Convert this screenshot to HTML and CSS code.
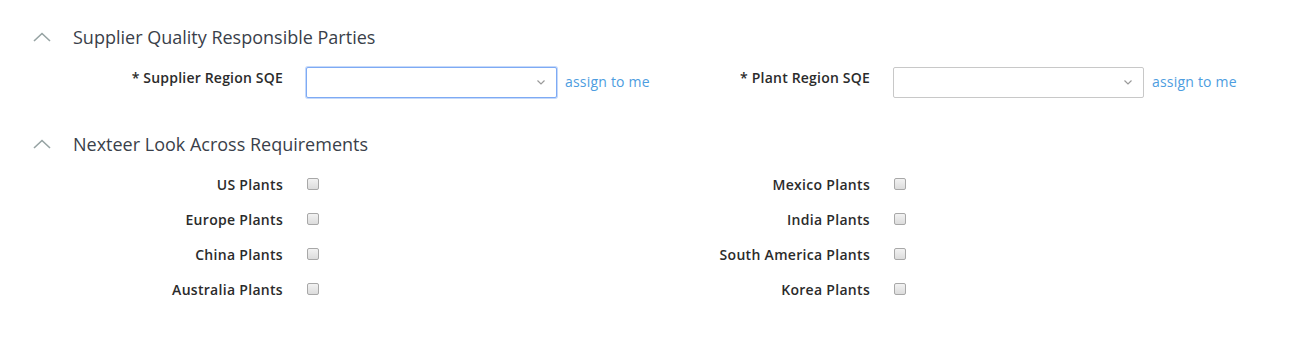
FILE: index.html
```html
<!DOCTYPE html>
<html lang="en">
<head>
  <meta charset="UTF-8" />
  <meta name="viewport" content="width=device-width, initial-scale=1.0" />
  <title>Supplier Quality</title>
  <link rel="stylesheet" href="styles.css">
</head>
<body>

  <div class="section">
    <div class="section-header">
      <svg class="chevron" width="18" height="10" viewBox="0 0 18 10"><polyline points="1,9 9,1.5 17,9" fill="none" stroke="#96a3a3" stroke-width="1.6"/></svg>
      <h3>Supplier Quality Responsible Parties</h3>
    </div>
    <div class="field-row">
      <div class="field">
        <label class="field-label">* Supplier Region SQE</label>
        <div class="select-wrap">
          <select class="select focused"><option></option></select>
          <svg class="select-arrow" width="8" height="5" viewBox="0 0 8 5"><polyline points="0.5,0.5 4,4 7.5,0.5" fill="none" stroke="#9a9a9a" stroke-width="1.2"/></svg>
        </div>
        <a href="#" class="assign-link">assign to me</a>
      </div>
      <div class="field">
        <label class="field-label">* Plant Region SQE</label>
        <div class="select-wrap">
          <select class="select"><option></option></select>
          <svg class="select-arrow" width="8" height="5" viewBox="0 0 8 5"><polyline points="0.5,0.5 4,4 7.5,0.5" fill="none" stroke="#9a9a9a" stroke-width="1.2"/></svg>
        </div>
        <a href="#" class="assign-link">assign to me</a>
      </div>
    </div>
  </div>

  <div class="section second">
    <div class="section-header">
      <svg class="chevron" width="18" height="10" viewBox="0 0 18 10"><polyline points="1,9 9,1.5 17,9" fill="none" stroke="#96a3a3" stroke-width="1.6"/></svg>
      <h3>Nexteer Look Across Requirements</h3>
    </div>
    <div class="check-grid">
      <div class="check-row"><label class="check-label">US Plants</label><input type="checkbox" class="check" /></div>
      <div class="check-row"><label class="check-label">Mexico Plants</label><input type="checkbox" class="check" /></div>
      <div class="check-row"><label class="check-label">Europe Plants</label><input type="checkbox" class="check" /></div>
      <div class="check-row"><label class="check-label">India Plants</label><input type="checkbox" class="check" /></div>
      <div class="check-row"><label class="check-label">China Plants</label><input type="checkbox" class="check" /></div>
      <div class="check-row"><label class="check-label">South America Plants</label><input type="checkbox" class="check" /></div>
      <div class="check-row"><label class="check-label">Australia Plants</label><input type="checkbox" class="check" /></div>
      <div class="check-row"><label class="check-label">Korea Plants</label><input type="checkbox" class="check" /></div>
    </div>
  </div>

</body>
</html>
```

FILE: styles.css
```css
* {
  box-sizing: border-box;
  font-family: "Open Sans", Arial, sans-serif;
}

body {
  margin: 0;
  padding: 25px 0 0 0;
  background: #fff;
  color: #333;
}

.section-header {
  display: flex;
  align-items: center;
  height: 24px;
  padding-left: 33px;
}

.chevron {
  margin-right: 22px;
}

.section-header h3 {
  margin: 0;
  font-size: 18px;
  font-weight: 400;
  color: #3a3f4a;
  line-height: 24px;
}

.second {
  margin-top: 34px;
}

.field-row {
  display: flex;
  margin-top: 18px;
}

.field {
  display: flex;
  align-items: flex-start;
  width: 587px;
  flex-shrink: 0;
}

.field-label {
  flex-shrink: 0;
  width: 283px;
  text-align: right;
  font-size: 14px;
  font-weight: 600;
  letter-spacing: 0.2px;
  line-height: 20px;
  padding-top: 1px;
  color: #2b2b2b;
}

.select-wrap {
  position: relative;
  flex-shrink: 0;
  margin-left: 23px;
}

.select {
  appearance: none;
  -webkit-appearance: none;
  display: block;
  width: 251px;
  height: 31px;
  border: 1px solid #c8c8c8;
  border-radius: 2px;
  background: #fff;
  outline: none;
}

.select.focused {
  border-color: #7eaaf4;
  box-shadow: 0 0 0 1px rgba(126, 170, 244, 0.45);
}

.select-arrow {
  position: absolute;
  right: 12px;
  top: 13px;
  pointer-events: none;
}

.assign-link {
  flex-shrink: 0;
  white-space: nowrap;
  margin-left: 8px;
  margin-top: 5px;
  font-size: 14px;
  letter-spacing: 0.2px;
  line-height: 20px;
  color: #4d9de0;
  text-decoration: none;
}

.check-grid {
  display: grid;
  grid-template-columns: 587px 587px;
  margin-top: 11px;
}

.check-row {
  display: flex;
  align-items: center;
  height: 35px;
}

.check-label {
  flex-shrink: 0;
  width: 283px;
  text-align: right;
  font-size: 14px;
  font-weight: 600;
  letter-spacing: 0.3px;
  color: #2b2b2b;
}

.check {
  appearance: none;
  -webkit-appearance: none;
  width: 12px;
  height: 12px;
  margin: 0 0 2px 24px;
  border: 1px solid #a8a8a8;
  border-radius: 2px;
  background: linear-gradient(#f2f2f2, #dcdcdc);
}
```
